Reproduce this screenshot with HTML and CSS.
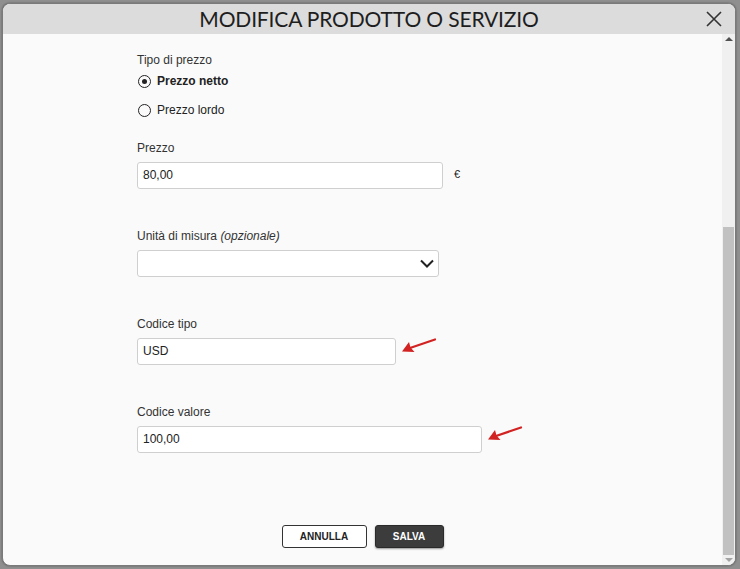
FILE: index.html
```html
<!DOCTYPE html>
<html lang="it">
<head>
    <meta charset="UTF-8">
    <meta name="viewport" content="width=device-width, initial-scale=1.0">
    <title>Modifica prodotto o servizio</title>
    <link rel="stylesheet" href="styles.css">
</head>
<body>
    <div class="dialog">
        <div class="dialog-head">
            <h1 class="dialog-title">MODIFICA PRODOTTO O SERVIZIO</h1>
            <button class="close-btn" type="button" aria-label="Chiudi">
                <svg width="16" height="16" viewBox="0 0 16 16">
                    <path d="M1 1 L15 15 M15 1 L1 15" stroke="#333" stroke-width="1.6" fill="none"/>
                </svg>
            </button>
        </div>

        <div class="dialog-body">
            <div class="content">
                <!-- tipo di prezzo -->
                <div class="label">Tipo di prezzo</div>
                <div class="radio-row checked">
                    <span class="radio"></span>
                    <span class="radio-text bold">Prezzo netto</span>
                </div>
                <div class="radio-row">
                    <span class="radio"></span>
                    <span class="radio-text">Prezzo lordo</span>
                </div>

                <!-- prezzo -->
                <div class="field first">
                    <div class="label">Prezzo</div>
                    <div class="row">
                        <div class="input w-price">80,00</div>
                        <span class="currency">€</span>
                    </div>
                </div>

                <!-- unita di misura -->
                <div class="field">
                    <div class="label">Unità di misura <i>(opzionale)</i></div>
                    <div class="input select w-select">
                        <svg class="chevron" width="14" height="9" viewBox="0 0 14 9">
                            <path d="M1 1.5 L7 7.5 L13 1.5" stroke="#222" stroke-width="2" fill="none"/>
                        </svg>
                    </div>
                </div>

                <!-- codice tipo -->
                <div class="field">
                    <div class="label">Codice tipo</div>
                    <div class="row">
                        <div class="input w-tipo">USD</div>
                        <svg class="arrow" width="36" height="16" viewBox="0 0 36 16">
                            <path d="M34 1.5 L9 10" stroke="#d32222" stroke-width="2.2" fill="none" stroke-linecap="round"/>
                            <path d="M1 13.5 L8 4 L9.5 9.5 L13.5 14 Z" fill="#d32222"/>
                        </svg>
                    </div>
                </div>

                <!-- codice valore -->
                <div class="field">
                    <div class="label">Codice valore</div>
                    <div class="row">
                        <div class="input w-valore">100,00</div>
                        <svg class="arrow" width="36" height="16" viewBox="0 0 36 16">
                            <path d="M34 1.5 L9 10" stroke="#d32222" stroke-width="2.2" fill="none" stroke-linecap="round"/>
                            <path d="M1 13.5 L8 4 L9.5 9.5 L13.5 14 Z" fill="#d32222"/>
                        </svg>
                    </div>
                </div>

                <div class="buttons">
                    <button class="btn btn-light" type="button">ANNULLA</button>
                    <button class="btn btn-dark" type="button">SALVA</button>
                </div>
            </div>

            <div class="scrollbar">
                <span class="sb-up"></span>
                <div class="sb-track">
                    <div class="sb-thumb"></div>
                </div>
                <span class="sb-down"></span>
            </div>
        </div>
    </div>
</body>
</html>
```

FILE: styles.css
```css
* {
    box-sizing: border-box;
}

body {
    margin: 0;
    height: 569px;
    background-color: #8f8f8f;
    font-family: Arial, "Liberation Sans", sans-serif;
    overflow: hidden;
}

/* dialog box */
.dialog {
    margin: 3px 0 0 2px;
    width: 734px;
    height: 563px;
    border: 1px solid #7a7a7a;
    border-radius: 8px;
    background-color: #fafafa;
    overflow: hidden;
    display: flex;
    flex-direction: column;
    box-shadow: 0 0 2px rgba(0, 0, 0, 0.4);
}

.dialog-head {
    height: 30px;
    background-color: #dcdcdc;
    display: flex;
    align-items: center;
    justify-content: center;
    position: relative;
    flex: none;
}

.dialog-title {
    margin: 0 0 1px;
    font-family: Lato, "Open Sans", sans-serif;
    font-weight: 400;
    font-size: 21px;
    letter-spacing: -0.15px;
    color: #1e1e1e;
}

.close-btn {
    position: absolute;
    right: 13px;
    top: 7px;
    border: none;
    background: none;
    padding: 0;
    width: 16px;
    height: 16px;
}

.dialog-body {
    flex: 1;
    display: flex;
}

.content {
    flex: 1;
    padding: 19px 0 0 134px;
    font-size: 12px;
    color: #333;
}

.label {
    line-height: 14px;
    margin-bottom: 7px;
}

.radio-row {
    display: flex;
    align-items: center;
    height: 20px;
    margin-top: -3px;
    margin-bottom: 12px;
}

.radio {
    width: 13px;
    height: 13px;
    border: 1.6px solid #222;
    border-radius: 50%;
    margin: 0 6px 0 1px;
    display: flex;
    align-items: center;
    justify-content: center;
}

.checked .radio::after {
    content: "";
    width: 5px;
    height: 5px;
    border-radius: 50%;
    background-color: #222;
}

.radio-text {
    color: #222;
}

.bold {
    font-weight: bold;
}

.field {
    margin-top: 40px;
}

.field.first {
    margin-top: 21px;
}

.row {
    display: flex;
    align-items: center;
}

.input {
    height: 27px;
    border: 1px solid #cfcfcf;
    border-radius: 3px;
    background-color: #fff;
    padding-left: 5px;
    line-height: 25px;
    color: #222;
}

.w-price {
    width: 306px;
}

.w-select {
    width: 302px;
}

.w-tipo {
    width: 259px;
}

.w-valore {
    width: 345px;
}

.select {
    display: flex;
    align-items: center;
    justify-content: flex-end;
    padding-right: 4px;
}

.currency {
    margin-left: 11px;
    margin-top: -3px;
    font-size: 11px;
    color: #222;
}

.arrow {
    margin: -12px 0 0 5px;
}

.buttons {
    display: flex;
    justify-content: center;
    gap: 8px;
    margin: 72px 0 0 -134px;
}

.btn {
    height: 23px;
    border-radius: 3px;
    font-family: Arial, "Liberation Sans", sans-serif;
    font-size: 10px;
    font-weight: bold;
    padding: 0;
}

.btn-light {
    width: 85px;
    background-color: #fff;
    border: 1px solid #333;
    color: #222;
}

.btn-dark {
    width: 69px;
    background-color: #3c3c3c;
    border: 1px solid #2a2a2a;
    color: #fff;
    box-shadow: 0 1px 2px rgba(0, 0, 0, 0.4);
}

/* fake scrollbar */
.scrollbar {
    width: 13px;
    background-color: #f0f0f0;
    display: flex;
    flex-direction: column;
    align-items: center;
    padding: 3px 0;
}

.sb-up,
.sb-down {
    width: 0;
    height: 0;
    border-left: 4px solid transparent;
    border-right: 4px solid transparent;
    flex: none;
}

.sb-up {
    border-bottom: 4px solid #505050;
    margin-bottom: 3px;
}

.sb-down {
    border-top: 4px solid #a3a3a3;
    margin-top: 3px;
}

.sb-track {
    flex: 1;
    width: 100%;
    display: flex;
    flex-direction: column;
    justify-content: flex-end;
}

.sb-thumb {
    height: 328px;
    margin: 0 1px;
    background-color: #c1c1c1;
}
```
